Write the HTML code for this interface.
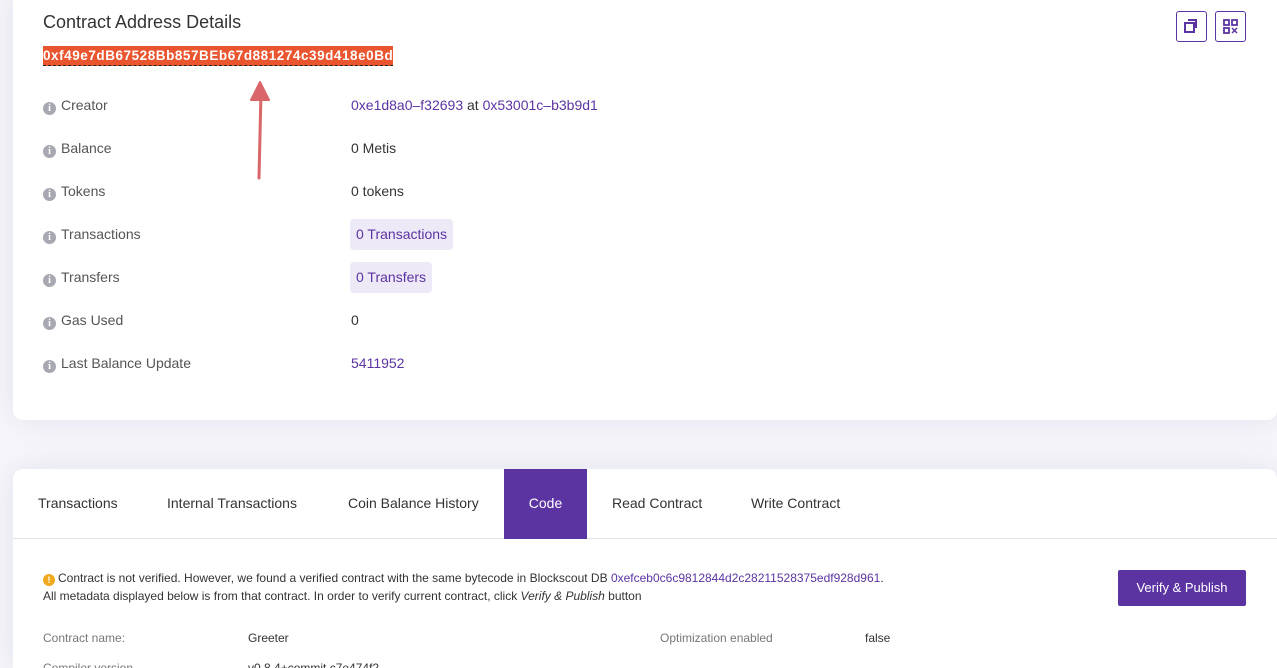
<!DOCTYPE html>
<html><head><meta charset="utf-8"><style>
*{box-sizing:border-box;margin:0;padding:0}
html,body{width:1277px;height:668px;overflow:hidden}
body{background:#f6f6fa;font-family:"Liberation Sans",sans-serif;color:#333;position:relative}
.card{position:absolute;left:13px;width:1264px;background:#fff;border-radius:10px;box-shadow:0 0 30px rgba(200,200,225,.45)}
.t{position:absolute;white-space:nowrap}
a{color:#5c34a2;text-decoration:none}
.lbl{color:#555;font-size:14px}
.ic{display:inline-block;width:13px;height:13px;border-radius:50%;background:#a8a8b3;color:#fff;font-size:10px;font-weight:bold;text-align:center;line-height:13px;font-family:"Liberation Serif",serif;margin-right:5px;vertical-align:-1px}
.v{font-size:14px;color:#333}
.btn{position:absolute;width:31px;height:31px;border:1.5px solid #5c34a2;border-radius:3px;top:11px}
.tab{position:absolute;top:0;height:70px;line-height:68px;font-size:14px;color:#333}
</style></head><body>
<div class="card" style="top:-10px;height:430px"></div>
<div class="t" style="left:43px;top:12px;font-size:18px;color:#333">Contract Address Details</div>
<div class="t" style="left:43px;top:46px;height:20px;width:350px;background:#e8552f;color:#fff;font-size:13.5px;font-weight:bold;line-height:19px;border-bottom:1px dashed #222;letter-spacing:0.55px">0xf49e7dB67528Bb857BEb67d881274c39d418e0Bd</div>
<svg class="t" style="left:245px;top:78px" width="30" height="105"><path d="M14 100 L16 14" stroke="#d9676a" stroke-width="3" fill="none" stroke-linecap="round"/><path d="M6 22 L15 4 L24 22 Z" fill="#d9676a" stroke="#d9676a" stroke-width="2" stroke-linejoin="round"/></svg>
<div class="btn" style="left:1176px"><svg width="28" height="28" style="position:absolute;left:0;top:0"><rect x="8" y="11" width="9" height="9" fill="none" stroke="#5c34a2" stroke-width="2"/><path d="M11 8h8v8" fill="none" stroke="#5c34a2" stroke-width="2"/></svg></div>
<div class="btn" style="left:1215px"><svg width="28" height="28" style="position:absolute;left:0;top:0"><rect x="8" y="8" width="5" height="5" fill="none" stroke="#5c34a2" stroke-width="1.8"/><rect x="16" y="8" width="5" height="5" fill="none" stroke="#5c34a2" stroke-width="1.8"/><rect x="8" y="16" width="5" height="5" fill="none" stroke="#5c34a2" stroke-width="1.8"/><path d="M16 16l5 5M21 16l-5 5" stroke="#5c34a2" stroke-width="1.5"/></svg></div>

<div class="t lbl" style="left:43px;top:97px"><span class="ic">i</span>Creator</div>
<div class="t v" style="left:351px;top:97px"><a>0xe1d8a0–f32693</a> at <a>0x53001c–b3b9d1</a></div>
<div class="t lbl" style="left:43px;top:140px"><span class="ic">i</span>Balance</div>
<div class="t v" style="left:351px;top:140px">0 Metis</div>
<div class="t lbl" style="left:43px;top:183px"><span class="ic">i</span>Tokens</div>
<div class="t v" style="left:351px;top:183px">0 tokens</div>
<div class="t lbl" style="left:43px;top:226px"><span class="ic">i</span>Transactions</div>
<div class="t v" style="left:350px;top:219px;height:31px;line-height:31px;padding:0 6px;background:#eee9f7;border-radius:4px;color:#5c34a2">0 Transactions</div>
<div class="t lbl" style="left:43px;top:269px"><span class="ic">i</span>Transfers</div>
<div class="t v" style="left:350px;top:262px;height:31px;line-height:31px;padding:0 6px;background:#eee9f7;border-radius:4px;color:#5c34a2">0 Transfers</div>
<div class="t lbl" style="left:43px;top:312px"><span class="ic">i</span>Gas Used</div>
<div class="t v" style="left:351px;top:312px">0</div>
<div class="t lbl" style="left:43px;top:355px"><span class="ic">i</span>Last Balance Update</div>
<div class="t v" style="left:351px;top:355px"><a>5411952</a></div>

<div class="card" style="top:469px;height:199px;border-bottom-left-radius:0;border-bottom-right-radius:0"></div>
<div style="position:absolute;left:13px;top:469px;width:1264px;height:70px;border-bottom:1px solid #e4e4ec">
<div class="tab" style="left:25px">Transactions</div>
<div class="tab" style="left:154px">Internal Transactions</div>
<div class="tab" style="left:335px">Coin Balance History</div>
<div class="tab" style="left:491px;width:83px;background:#5c34a2;color:#fff;text-align:center">Code</div>
<div class="tab" style="left:599px">Read Contract</div>
<div class="tab" style="left:738px">Write Contract</div>
</div>
<div class="t" style="left:43px;top:571px;font-size:12px;color:#333"><span style="display:inline-block;width:12px;height:12px;border-radius:50%;background:#f0a91e;color:#fff;font-size:9px;font-weight:bold;text-align:center;line-height:12px;margin-right:3px;vertical-align:-1px">!</span>Contract is not verified. However, we found a verified contract with the same bytecode in Blockscout DB <a>0xefceb0c6c9812844d2c28211528375edf928d961</a>.</div>
<div class="t" style="left:43px;top:589px;font-size:12px;color:#333">All metadata displayed below is from that contract. In order to verify current contract, click <i>Verify &amp; Publish</i> button</div>
<div class="t" style="left:1118px;top:570px;width:128px;height:36px;background:#5c34a2;border-radius:2px;color:#fff;font-size:13px;text-align:center;line-height:36px">Verify &amp; Publish</div>
<div class="t" style="left:43px;top:631px;font-size:12px;color:#777">Contract name:</div>
<div class="t" style="left:248px;top:631px;font-size:12px;color:#333">Greeter</div>
<div class="t" style="left:660px;top:631px;font-size:12px;color:#777">Optimization enabled</div>
<div class="t" style="left:865px;top:631px;font-size:12px;color:#333">false</div>
<div class="t" style="left:43px;top:661px;font-size:12px;color:#777">Compiler version</div>
<div class="t" style="left:248px;top:661px;font-size:12px;color:#333">v0.8.4+commit.c7e474f2</div>
</body></html>
